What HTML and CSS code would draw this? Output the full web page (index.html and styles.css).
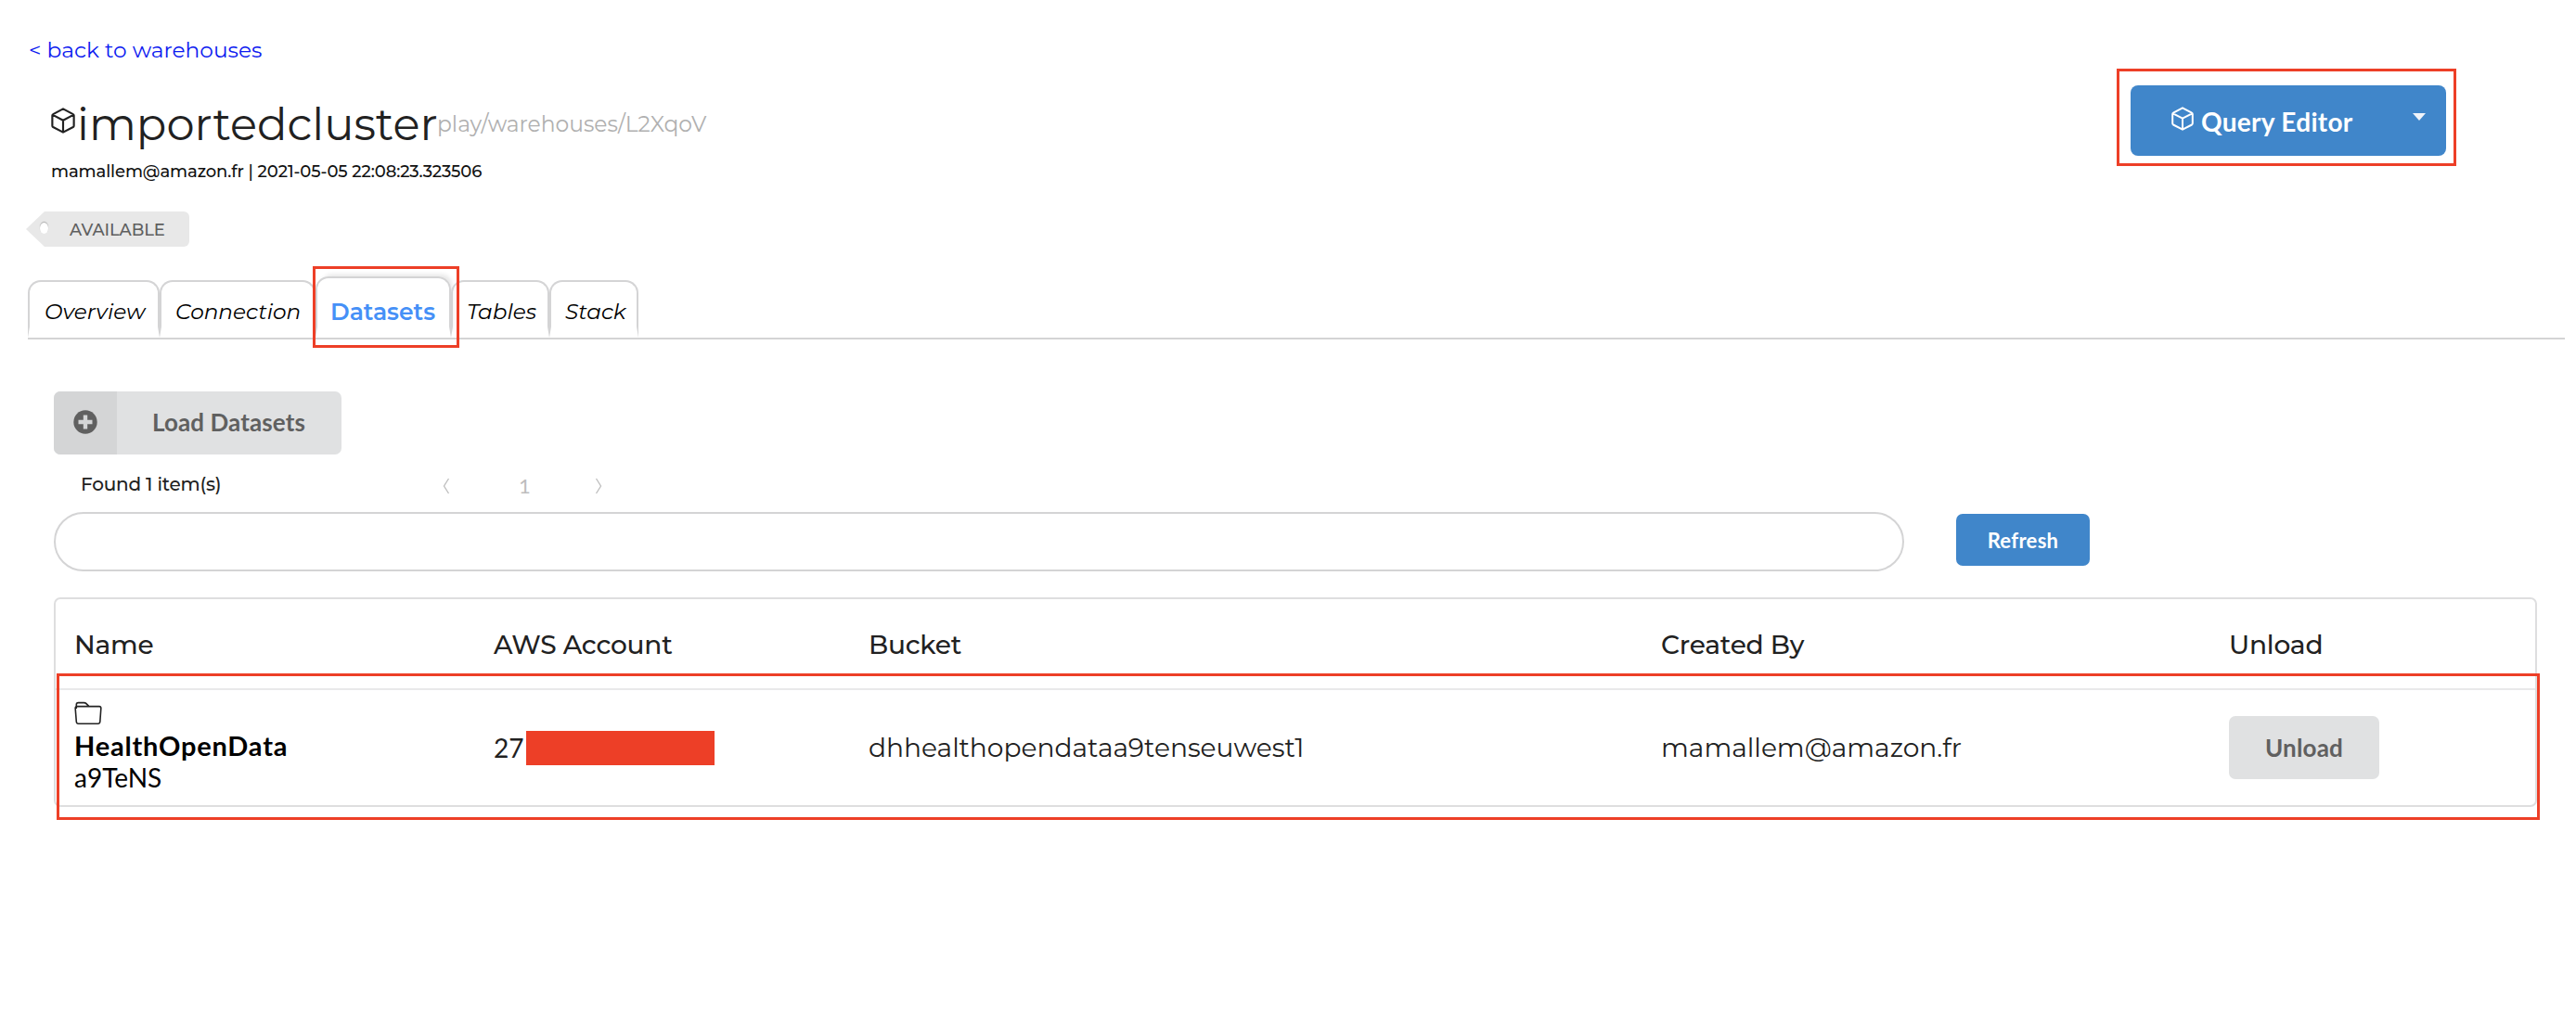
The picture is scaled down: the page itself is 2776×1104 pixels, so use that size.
FILE: index.html
```html
<!DOCTYPE html>
<html lang="en">
<head>
<meta charset="utf-8">
<title>importedcluster</title>
<link rel="stylesheet" href="styles.css">
</head>
<body>
<svg class="defs" aria-hidden="true">
  <symbol id="cube" viewBox="0 0 24 26">
    <path d="M12 1.3 L22 6.6 Q22.8 7 22.8 8 V18 Q22.8 19 22 19.5 L12 24.7 L2 19.5 Q1.2 19 1.2 18 V8 Q1.2 7 2 6.6 Z M1.7 7.3 L12 12.7 L22.3 7.3 M12 12.7 V24.5" fill="none" stroke="currentColor" stroke-width="2" stroke-linejoin="round"/>
  </symbol>
</svg>
<main class="page">
  <a class="back">&lt; back to warehouses</a>
  <header class="top">
    <div class="heading">
      <h1 class="title"><svg class="title-icon"><use href="#cube"/></svg><span class="title-name">importedcluster</span><span class="title-path">play/warehouses/L2XqoV</span></h1>
      <p class="meta"><span>mamallem@amazon.fr | 2021-05-05 22:08:23.323506</span></p>
    </div>
    <div class="editor-mark">
      <button class="editor"><svg class="editor-icon"><use href="#cube"/></svg><span class="editor-label">Query Editor</span><i class="caret"></i></button>
    </div>
  </header>
  <div class="tag"><i class="hole"></i><span class="tag-label">AVAILABLE</span></div>
  <nav class="tabs">
    <a class="tab overview"><span>Overview</span></a>
    <a class="tab connection"><span>Connection</span></a>
    <a class="tab active"><span>Datasets</span></a>
    <a class="tab tables"><span>Tables</span></a>
    <a class="tab stack"><span>Stack</span></a>
    <i class="mark tab-mark"></i>
  </nav>
  <section class="panel">
    <button class="load"><span class="load-icon"><svg viewBox="0 0 26 26"><circle cx="13" cy="13" r="12.7" fill="currentColor"/><path d="M13 5.5V20.5M5.5 13H20.5" stroke="#d4d5d6" stroke-width="4.4"/></svg></span><span class="load-label">Load Datasets</span></button>
    <div class="results">
      <span class="found">Found 1 item(s)</span>
      <svg class="chev" viewBox="0 0 8 18"><path d="M6.5 1L1.5 9L6.5 17"/></svg>
      <span class="pageno">1</span>
      <svg class="chev" viewBox="0 0 8 18"><path d="M1.5 1L6.5 9L1.5 17"/></svg>
    </div>
    <div class="search">
      <input class="field" type="text" aria-label="Search">
      <button class="refresh">Refresh</button>
    </div>
    <div class="table">
      <div class="row head">
        <span>Name</span><span>AWS Account</span><span>Bucket</span><span>Created By</span><span>Unload</span>
      </div>
      <div class="row data">
        <div class="name">
          <svg class="folder" viewBox="0 0 30 26"><path d="M2.3 8V3.6Q2.3 1.6 4.3 1.6H10.5Q12 1.6 13 2.6L16 5.6M3 5.6H27Q29 5.6 28.8 8L27.8 22Q27.6 24.3 25.5 24.3H4.5Q2.5 24.3 2.3 22L1.2 8Q1 5.6 3 5.6Z"/></svg>
          <strong>HealthOpenData</strong>
          <span>a9TeNS</span>
        </div>
        <div class="account"><span>27</span><i class="redact"></i></div>
        <span>dhhealthopendataa9tenseuwest1</span>
        <span>mamallem@amazon.fr</span>
        <div><button class="unload">Unload</button></div>
      </div>
      <i class="mark row-mark"></i>
    </div>
  </section>
</main>
</body>
</html>
```
FILE: styles.css
```css
* { box-sizing: border-box; }
body { margin: 0; background: #fff; color: #212121; font-family: Montserrat, Inter, sans-serif; }
h1, p { margin: 0; font-weight: 400; }
button { border: 0; padding: 0; font-family: Lato, sans-serif; font-weight: 700; }
.defs { position: absolute; width: 0; height: 0; }
.page { width: 2776px; height: 1104px; overflow: hidden; padding: 38px 12px 0 30px; }
.page span, .page strong { white-space: nowrap; }
.back { display: block; height: 32px; line-height: 32px; padding-left: 1px; font-size: 23.3px; color: #0d1bf0; }
.top { display: flex; justify-content: space-between; height: 158px; }
.heading { padding: 32px 0 0 24px; }
.title { display: flex; height: 64px; line-height: 64px; }
.title-icon { width: 26px; height: 28px; margin: 14px 2px 0 1px; }
.title-name { width: 388px; font-size: 48px; font-weight: 400; }
.title-path { font-size: 23.4px; font-weight: 400; color: #b0b0b0; }
.meta { height: 34px; line-height: 36px; margin-top: 1px; padding-left: 1px; font-size: 18px; font-weight: 500; letter-spacing: -0.1px; color: #111; }
.editor-mark { width: 366px; height: 105px; margin: 4px 117px 0 0; padding: 15px 8px 0 12px; border: 3px solid #ed3f27; }
.editor { display: flex; width: 340px; height: 76px; border-radius: 8px; background: #4086ca; color: #fff; }
.editor-icon { width: 24px; height: 26px; margin: 23px 8px 0 44px; }
.editor-label { width: 163px; line-height: 78px; font-size: 28px; letter-spacing: 0.3px; text-align: left; }
.caret { border: 7px solid transparent; border-top: 8px solid #f0f4fa; border-bottom: 0; margin: 30px 0 0 65px; }
.tag { display: flex; width: 176px; height: 38px; background: #e8e8e8; clip-path: polygon(0 50%, 20px 0, 100% 0, 100% 100%, 20px 100%); border-radius: 6px; margin-left: -2px; }
.hole { width: 9px; height: 12px; border-radius: 50%; background: #fff; box-shadow: 0 -1px 1px #aaa; margin: 12px 0 0 15px; }
.tag-label { margin-left: 23px; line-height: 40px; font-size: 18px; font-weight: 500; letter-spacing: -0.1px; color: #5f5f5f; }
.tabs { position: relative; display: flex; align-items: flex-end; height: 100px; border-bottom: 2px solid #d4d4d5; }
.tab { height: 62px; line-height: 64px; padding-left: 15px; border: 2px solid #d4d4d5; border-bottom: 12px solid transparent; border-radius: 14px 14px 0 0; font-size: 23.2px; font-weight: 400; font-style: italic; color: #000; }
.overview { width: 142px; padding-left: 16px; }
.connection { width: 168px; }
.active { width: 146px; height: 66px; line-height: 72px; padding-left: 14px; font-style: normal; font-weight: 600; font-size: 25px; color: #4590f7; box-shadow: 4px -5px 5px -3px #e6e6e6; }
.tables { width: 106px; }
.stack { width: 96px; }
.mark { position: absolute; border: 3px solid #ed3f27; pointer-events: none; }
.tab-mark { left: 307px; top: 21px; width: 158px; height: 88px; }
.panel { padding: 56px 31px 0 28px; }
.load { display: flex; width: 310px; height: 68px; overflow: hidden; border-radius: 7px; background: #e0e1e2; color: #606060; }
.load-icon { width: 68px; height: 68px; padding: 20px 0 0 21px; background: #d4d5d6; text-align: left; }
.load-icon svg { display: block; width: 26px; height: 26px; }
.load-label { margin-left: 38px; line-height: 66px; font-size: 26px; letter-spacing: 0.1px; }
.results { display: flex; height: 62px; padding-left: 29px; }
.found { width: 390px; line-height: 64px; font-size: 20px; font-weight: 500; letter-spacing: -0.2px; }
.chev { width: 8px; height: 18px; margin-top: 25px; fill: none; stroke: #bdbdbd; stroke-width: 1.3; }
.pageno { width: 156px; padding-left: 5px; text-align: center; font: 22px/68px Lato, sans-serif; color: #bdbdbd; }
.search { display: flex; gap: 56px; height: 92px; }
.field { width: 1994px; height: 64px; border: 2px solid #d4d4d5; border-radius: 32px; background: #fff; padding: 0 28px; font: 24px Montserrat, Inter, sans-serif; }
.refresh { width: 144px; height: 56px; margin-top: 2px; border-radius: 7px; background: #4086ca; color: #fff; font-size: 22px; letter-spacing: 0.3px; }
.table { position: relative; width: 2676px; height: 226px; border: 2px solid #dededf; border-radius: 7px; }
.row { display: grid; grid-template-columns: 452px 404px 854px 612px 300px; padding-left: 20px; }
.head { height: 96px; line-height: 98px; font-size: 28px; font-weight: 500; letter-spacing: -0.2px; }
.data { height: 126px; border-top: 2px solid #e9e9ea; align-items: center; font-size: 28.1px; }
.name { display: flex; flex-direction: column; color: #000; font: 28px/35px Lato, sans-serif; }
.name strong { font-size: 29px; letter-spacing: 0.8px; }
.folder { width: 30px; height: 26px; margin-bottom: 4px; fill: none; stroke: #222; stroke-width: 1.6; }
.account { display: flex; align-items: center; font-family: Lato, sans-serif; }
.redact { width: 203px; height: 37px; margin-left: 2px; background: #ed3f27; }
.unload { width: 162px; height: 68px; border-radius: 7px; background: #e0e1e2; color: #606060; font-size: 26px; letter-spacing: 0.2px; }
.row-mark { left: 1px; top: 80px; width: 2676px; height: 158px; }
```
